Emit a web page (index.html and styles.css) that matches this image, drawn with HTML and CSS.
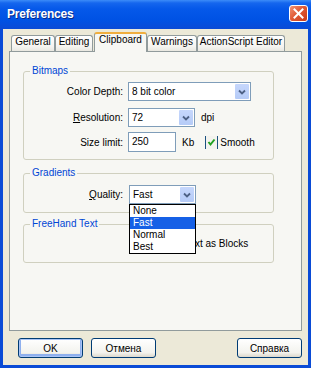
FILE: index.html
```html
<!DOCTYPE html>
<html>
<head>
<meta charset="utf-8">
<title>Preferences</title>
<link rel="stylesheet" href="styles.css">
</head>
<body>
<div class="window">
  <div class="titlebar">
    <span class="title">Preferences</span>
    <span class="close"><svg width="17" height="15" viewBox="0 0 17 15"><path d="M4.5 3.5 L12.5 11.5 M12.5 3.5 L4.5 11.5" stroke="#fff" stroke-width="2" stroke-linecap="square" fill="none"/></svg></span>
  </div>
  <div class="client">
    <div class="tabs">
      <div class="tab t-general">General</div>
      <div class="tab t-editing">Editing</div>
      <div class="tab sel t-clip">Clipboard</div>
      <div class="tab t-warn">Warnings</div>
      <div class="tab t-as">ActionScript Editor</div>
    </div>
    <div class="panel">
      <fieldset class="group g-bitmaps">
        <legend>Bitmaps</legend>
        <div class="row r-first">
          <span class="lbl">Color Depth:</span>
          <div class="combo w-depth"><span class="val">8 bit color</span><span class="dbtn"><svg width="8" height="6" viewBox="0 0 8 6"><path d="M1 1.5 L4 4.5 L7 1.5" stroke="#4D6185" stroke-width="1.8" fill="none"/></svg></span></div>
        </div>
        <div class="row r-second">
          <span class="lbl"><u>R</u>esolution:</span>
          <div class="combo w-small"><span class="val">72</span><span class="dbtn"><svg width="8" height="6" viewBox="0 0 8 6"><path d="M1 1.5 L4 4.5 L7 1.5" stroke="#4D6185" stroke-width="1.8" fill="none"/></svg></span></div>
          <span class="unit">dpi</span>
        </div>
        <div class="row r-third">
          <span class="lbl">Size limit:</span>
          <div class="input"><span class="val">250</span></div>
          <span class="unit">Kb</span>
          <span class="chk chk-smooth"><svg width="11" height="11" viewBox="0 0 11 11"><path d="M2.5 5 L4.5 7.5 L8.5 2.5" stroke="#21A121" stroke-width="2" fill="none"/></svg></span>
          <span class="chklbl">Smooth</span>
        </div>
      </fieldset>
      <fieldset class="group g-grad">
        <legend>Gradients</legend>
        <div class="row r-quality">
          <span class="lbl lbl-q"><u>Q</u>uality:</span>
          <div class="combo w-small open">
            <span class="val">Fast</span><span class="dbtn"><svg width="8" height="6" viewBox="0 0 8 6"><path d="M1 1.5 L4 4.5 L7 1.5" stroke="#4D6185" stroke-width="1.8" fill="none"/></svg></span>
            <ul class="list">
              <li>None</li>
              <li class="hl">Fast</li>
              <li>Normal</li>
              <li>Best</li>
            </ul>
          </div>
        </div>
      </fieldset>
      <fieldset class="group g-free">
        <legend>FreeHand Text</legend>
        <div class="row r-free">
          <span class="lbl"></span>
          <span class="chk chk-free"><svg width="11" height="11" viewBox="0 0 11 11"><path d="M2.5 5 L4.5 7.5 L8.5 2.5" stroke="#21A121" stroke-width="2" fill="none"/></svg></span>
          <span class="chklbl">Maintain Text as Blocks</span>
        </div>
      </fieldset>
    </div>
    <div class="buttons">
      <div class="btn default">OK</div>
      <div class="btn cancel">Отмена</div>
      <div class="btn help">Справка</div>
    </div>
  </div>
</div>
</body>
</html>
```

FILE: styles.css
```css
* { box-sizing: border-box; }
html, body { margin: 0; padding: 0; }
body {
  width: 311px;
  height: 368px;
  overflow: hidden;
  font-family: "Liberation Sans", Arial, sans-serif;
  font-size: 10px;
  color: #000;
  background: #0B4DD8;
}
.window {
  width: 311px;
  height: 368px;
  display: flex;
  flex-direction: column;
  background: #0A4BD6;
}
.titlebar {
  height: 29px;
  flex: none;
  display: flex;
  align-items: flex-start;
  background: linear-gradient(#3C8CF8 0, #1566EE 3px, #0558E9 9px, #0052E4 20px, #0A4AD6 29px);
}
.title {
  margin: 7px 0 0 7px;
  font-weight: bold;
  font-size: 12px;
  line-height: 14px;
  letter-spacing: -0.2px;
  color: #fff;
  text-shadow: 1px 1px 0 #0A2A88;
}
.close {
  margin: 5px 3px 0 auto;
  width: 19px;
  height: 17px;
  border: 1px solid #fff;
  border-radius: 3px;
  background: linear-gradient(135deg, #F19475 0, #E05A36 45%, #C73A18 100%);
  display: flex;
  align-items: center;
  justify-content: center;
}
.close svg { display: block; }
.client {
  flex: 1;
  margin: 0 3px 3px;
  background: #ECE9D8;
  display: flex;
  flex-direction: column;
  padding: 3px 6px 7px;
}
.tabs {
  height: 19px;
  flex: none;
  display: flex;
  align-items: flex-end;
  padding-left: 2px;
}
.tab {
  height: 16px;
  border: 1px solid #919B9C;
  border-bottom: none;
  border-radius: 3px 3px 0 0;
  background: linear-gradient(#FFFFFF, #F5F4F0 70%, #E9E8E1);
  text-align: center;
  line-height: 12px;
  white-space: nowrap;
}
.t-general { width: 44px; }
.t-editing { width: 38px; margin-right: 1px; }
.t-clip { width: 53px; }
.t-warn { width: 50px; }
.t-as { width: 88px; }
.tab.sel {
  height: 20px;
  margin-bottom: -1px;
  border-top: 2px solid #F0AE3E;
  background: #F7F7F3;
  position: relative;
  z-index: 1;
}
.panel {
  height: 280px;
  flex: none;
  border: 1px solid #919B9C;
  background: #F7F7F3;
  padding: 13px 0 0 13px;
  display: flex;
  flex-direction: column;
}
.group {
  margin: 0;
  width: 251px;
  border: 1px solid #D0D0BF;
  border-radius: 3px;
  padding: 0;
}
.group legend {
  color: #0046D5;
  padding: 0 2px;
  margin-left: 6px;
  line-height: 12px;
}
.g-bitmaps { padding-bottom: 7px; }
.g-grad { margin-top: 7px; padding-bottom: 8px; }
.g-free { margin-top: 5px; padding-bottom: 12px; }
.row {
  display: flex;
  align-items: center;
  height: 19px;
}
.r-first { margin-top: 5px; }
.r-second { margin-top: 7px; }
.r-third { margin-top: 5px; height: 20px; }
.r-quality { margin-top: 6px; }
.r-free { margin-top: 7px; height: 13px; }
.lbl {
  width: 99px;
  margin-right: 5px;
  text-align: right;
  white-space: nowrap;
}
.lbl-q { margin-right: 6px; }
.combo {
  height: 19px;
  border: 1px solid #7F9DB9;
  background: #fff;
  display: flex;
  position: relative;
}
.w-depth { width: 123px; }
.w-small { width: 67px; }
.combo .val {
  flex: 1;
  padding-left: 3px;
  line-height: 17px;
}
.dbtn {
  width: 14px;
  margin: 1px;
  background: linear-gradient(#C6D7FC, #B5CBF7);
  border-radius: 1px;
  display: flex;
  align-items: center;
  justify-content: center;
}
.dbtn svg { display: block; }
.input {
  width: 48px;
  height: 20px;
  border: 1px solid #7F9DB9;
  background: #fff;
  padding-left: 3px;
  line-height: 18px;
}
.unit { margin-left: 6px; }
.chk {
  width: 13px;
  height: 13px;
  border-left: 1px solid #1C5180;
  border-right: 1px solid #1C5180;
  background: #F3F3EE;
  display: flex;
  align-items: center;
  justify-content: center;
}
.chk svg { display: block; }
.chk-smooth { margin-left: 11px; }
.chk-free { margin-left: 1px; }
.chklbl { margin-left: 2px; white-space: nowrap; }
.list {
  position: absolute;
  left: -1px;
  top: 18px;
  width: 67px;
  margin: 0;
  padding: 0;
  list-style: none;
  border: 1px solid #000;
  background: #fff;
  z-index: 5;
}
.list li {
  height: 12px;
  line-height: 12px;
  padding-left: 3px;
}
.list li.hl {
  background: #1660E6;
  color: #fff;
}
.buttons {
  display: flex;
  margin-top: 7px;
  height: 20px;
  flex: none;
}
.btn {
  width: 65px;
  height: 20px;
  border: 1px solid #003C74;
  border-radius: 3px;
  background: linear-gradient(#FFFFFF, #F3F3EE 75%, #DCD8CC);
  display: flex;
  align-items: center;
  justify-content: center;
}
.btn.default {
  margin-left: 9px;
  box-shadow: inset 0 0 0 1px #A9C4F5, inset 0 -1px 0 2px #8FB0EE;
}
.btn.cancel { margin-left: 8px; }
.btn.help { margin-left: auto; }
```
